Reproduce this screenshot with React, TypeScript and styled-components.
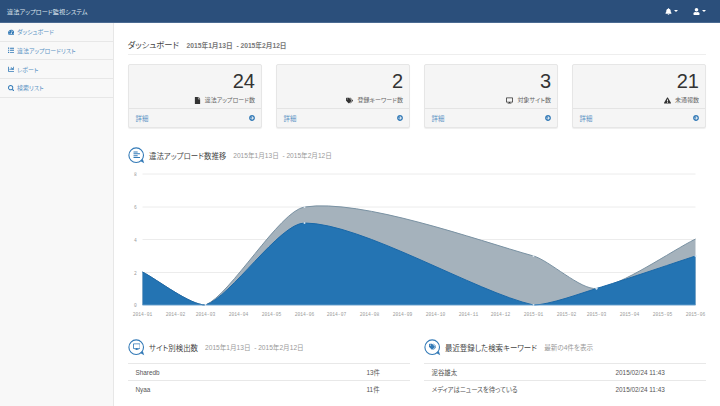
import React from "react";
import styled, { createGlobalStyle } from "styled-components";
import {
  FaTachometerAlt, FaList, FaChartBar, FaSearch, FaFile, FaTags, FaDesktop,
  FaExclamationTriangle, FaArrowCircleRight, FaBell, FaUser, FaAlignLeft,
} from "react-icons/fa";

const Global = createGlobalStyle`
  html, body { margin: 0; padding: 0; width: 720px; height: 406px; overflow: hidden; background: #fff; }
  body { font-family: "Liberation Sans", "Noto Sans CJK JP", sans-serif; color: #333; font-size: 7px; font-feature-settings: "palt"; }
  * { box-sizing: border-box; }
`;

const Page = styled.div`width: 720px; height: 406px; overflow: hidden; display: flex; flex-direction: column;`;
const Navbar = styled.header`
  height: 23px; flex: none; background: #2b4f7b; border-bottom: 1px solid #4a6a92;
  display: flex; align-items: center; justify-content: space-between; padding: 0 14px 0 7px;
`;
const Brand = styled.div`color: #dce4ec; font-size: 6.2px;`;
const NavTools = styled.div`display: flex; gap: 15px; align-items: center;`;
const NavTool = styled.div`display: flex; align-items: center; gap: 2px; color: #fff; font-size: 7px;`;
const Caret = styled.span`
  width: 0; height: 0; border-left: 2.2px solid transparent; border-right: 2.2px solid transparent;
  border-top: 2.2px solid #fff;
`;
const Body = styled.div`flex: 1; display: flex; min-height: 0;`;
const Sidebar = styled.nav`width: 114px; flex: none; background: #f8f8f8; border-right: 1px solid #e7e7e7;`;
const SideItem = styled.a`
  display: flex; align-items: center; gap: 3px; height: 18.7px; padding: 0 0 0 7.5px;
  color: #5b93c4; font-size: 5.95px; border-bottom: 1px solid #e7e7e7;
  svg { color: #337ab7; width: 6.5px; height: 6.5px; flex: none; }
`;
const Main = styled.main`flex: 1; padding: 0 14px 0 13.5px; min-width: 0;`;
const PageHeader = styled.div`
  height: 32px; border-bottom: 1px solid #eee; display: flex; align-items: flex-end; gap: 7.5px;
  padding-bottom: 3.5px; margin-bottom: 9px;
`;
const PageTitle = styled.h1`margin: 0; font-weight: 400; font-size: 8.3px; color: #444; line-height: 11px;`;
const PageDate = styled.span`font-weight: 700; font-size: 6.7px; color: #777; line-height: 10px;`;
const Cards = styled.section`display: grid; grid-template-columns: repeat(4, 134.5px); gap: 13.5px;`;
const Card = styled.article`
  height: 64px; background: #f5f5f5; border: 1px solid #e6e6e6; border-radius: 2px;
  box-shadow: 0 1px 1px rgba(0,0,0,.07); display: flex; flex-direction: column;
`;
const CardBody = styled.div`height: 44px; padding: 5px 6px 0 0; text-align: right; border-bottom: 1px solid #e4e4e4;`;
const CardNum = styled.div`font-size: 20px; line-height: 23px; color: #333;`;
const CardLabel = styled.div`
  display: flex; justify-content: flex-end; align-items: center; gap: 4px; margin-top: 2px;
  font-size: 6px; line-height: 10px; color: #666;
  svg { color: #333; width: 7px; height: 7px; }
`;
const CardFoot = styled.a`
  flex: 1; display: flex; justify-content: space-between; align-items: center; padding: 0 6px 0 7px;
  color: #5b93c4; font-size: 6.4px;
  svg { color: #337ab7; width: 6px; height: 6px; }
`;
const SectionHead = styled.div<{ $top: number }>`
  display: flex; align-items: center; height: 16px; margin-top: ${(p) => p.$top}px; gap: 4px;
`;
const SectionTitle = styled.h2`margin: 0; font-weight: 400; font-size: 7.45px; color: #444;`;
const SectionSub = styled.span`font-size: 6.6px; color: #999; margin-left: 3px;`;
const Bubble = styled.div`
  position: relative; width: 17px; height: 17px; flex: none; margin-left: 0.5px;
  > svg:first-child { position: absolute; inset: 0; width: 17px; height: 17px; }
`;
const BubbleGlyph = styled.div`
  position: absolute; inset: 0; display: flex; align-items: center; justify-content: center; color: #337ab7;
  svg { width: 7.5px; height: 7.5px; }
`;
const ChartWrap = styled.div`margin-top: 7px; height: 150px; svg { display: block; }`;
const Lower = styled.section`display: grid; grid-template-columns: 282.5px 282.5px; gap: 13.5px;`;
const DataTable = styled.div`margin-top: 8px;`;
const DataRow = styled.div<{ $first: number }>`
  display: grid; grid-template-columns: ${(p) => p.$first}px 1fr; height: 17px; align-items: center;
  border-top: 1px solid #e8e8e8; padding-left: 8px; font-size: 6.4px; color: #555;
`;
const DataCell = styled.span``;

type P = { x: number; y: number };
const X0 = 127.5, Y0 = 170;
const top: P[] = [[142, 272], [205, 305], [304, 207], [533, 256], [596, 288.5], [695, 239]].map(([x, y]) => ({ x: x - X0, y: y - Y0 }));
const bot: P[] = [[142, 272], [205, 305], [304, 223], [533, 305], [596, 288.5], [695, 256]].map(([x, y]) => ({ x: x - X0, y: y - Y0 }));
const YMAX = 305 - Y0;

function smooth(c: P[]) {
  const g = c.map((p, i) => {
    if (i === 0) return (c[1].y - p.y) / (c[1].x - p.x);
    if (i === c.length - 1) return (p.y - c[i - 1].y) / (p.x - c[i - 1].x);
    return (c[i + 1].y - c[i - 1].y) / (c[i + 1].x - c[i - 1].x);
  });
  let d = `M${c[0].x},${c[0].y}`;
  for (let i = 1; i < c.length; i++) {
    const ix = (c[i].x - c[i - 1].x) / 4;
    const y1 = Math.min(YMAX, c[i - 1].y + ix * g[i - 1]);
    const y2 = Math.min(YMAX, c[i].y - ix * g[i]);
    d += ` C${c[i - 1].x + ix},${y1} ${c[i].x - ix},${y2} ${c[i].x},${c[i].y}`;
  }
  return d;
}
const area = (d: string, c: P[]) => `${d} L${c[c.length - 1].x},${YMAX} L${c[0].x},${YMAX} Z`;

const grid = [[8, 174], [6, 207], [4, 239.5], [2, 272.5], [0, 305]];
const xLabels: [string, number][] = [
  ["2014-01", 142], ["2014-02", 175], ["2014-03", 205], ["2014-04", 238], ["2014-05", 271], ["2014-06", 304],
  ["2014-07", 336], ["2014-08", 369], ["2014-09", 402], ["2014-10", 435], ["2014-11", 468], ["2014-12", 500],
  ["2015-01", 533], ["2015-02", 566], ["2015-03", 596], ["2015-04", 629], ["2015-05", 662], ["2015-06", 695],
];

function AreaChart() {
  const dt = smooth(top), db = smooth(bot);
  return (
    <svg width={579} height={150} viewBox="0 0 579 150" fontFamily="'Liberation Mono', monospace">
      {grid.map(([v, y]) => (
        <g key={v}>
          <line x1={14.5} x2={567.5} y1={y - Y0} y2={y - Y0} stroke={v === 0 ? "#cfe0ee" : "#ececec"} strokeWidth={1} />
          <text x={7.5} y={y - Y0 + 2} fontSize={4.6} fill="#999" textAnchor="middle">{v}</text>
        </g>
      ))}
      <path d={area(dt, top)} fill="#a5b2bc" />
      <path d={dt} fill="none" stroke="#7a92a3" strokeWidth={1} />
      <path d={area(db, bot)} fill="#2474b3" />
      <path d={db} fill="none" stroke="#1a68a8" strokeWidth={1} />
      <line x1={14.5} x2={567.5} y1={YMAX} y2={YMAX} stroke="#6ea3cf" strokeWidth={0.8} />
      {top.slice(1, 5).map((p) => <circle key={p.x} cx={p.x} cy={p.y} r={1} fill="#dfe8ef" />)}
      {bot.slice(2, 6).map((p) => <circle key={p.x} cx={p.x} cy={p.y} r={1} fill="#cfe0ee" />)}
      {xLabels.map(([t, x]) => (
        <text key={t} x={x - X0} y={146} fontSize={4.6} fill="#999" textAnchor="middle">{t}</text>
      ))}
    </svg>
  );
}

function BubbleIcon({ children }: { children: React.ReactNode }) {
  return (
    <Bubble>
      <svg viewBox="0 0 17 17">
        <circle cx="8.2" cy="8.2" r="7.3" fill="#fff" stroke="#337ab7" strokeWidth="1.1" />
        <path d="M12.2 14 L16.2 16.2 L14.8 12 Z" fill="#337ab7" />
      </svg>
      <BubbleGlyph>{children}</BubbleGlyph>
    </Bubble>
  );
}

const cards = [
  { n: "24", icon: <FaFile />, label: "違法アップロード数" },
  { n: "2", icon: <FaTags />, label: "登録キーワード数" },
  { n: "3", icon: <FaDesktop />, label: "対象サイト数" },
  { n: "21", icon: <FaExclamationTriangle />, label: "未通報数" },
];

export default function App() {
  return (
    <Page>
      <Global />
      <Navbar>
        <Brand>違法アップロード監視システム</Brand>
        <NavTools>
          <NavTool><FaBell /><Caret /></NavTool>
          <NavTool><FaUser /><Caret /></NavTool>
        </NavTools>
      </Navbar>
      <Body>
        <Sidebar>
          <SideItem><FaTachometerAlt />ダッシュボード</SideItem>
          <SideItem><FaList />違法アップロードリスト</SideItem>
          <SideItem><FaChartBar />レポート</SideItem>
          <SideItem><FaSearch />検索リスト</SideItem>
        </Sidebar>
        <Main>
          <PageHeader>
            <PageTitle>ダッシュボード</PageTitle>
            <PageDate>2015年1月13日 &nbsp;- 2015年2月12日</PageDate>
          </PageHeader>
          <Cards>
            {cards.map((c) => (
              <Card key={c.label}>
                <CardBody>
                  <CardNum>{c.n}</CardNum>
                  <CardLabel>{c.icon}{c.label}</CardLabel>
                </CardBody>
                <CardFoot>詳細<FaArrowCircleRight /></CardFoot>
              </Card>
            ))}
          </Cards>
          <SectionHead $top={19}>
            <BubbleIcon><FaAlignLeft /></BubbleIcon>
            <SectionTitle>違法アップロード数推移</SectionTitle>
            <SectionSub>2015年1月13日 &nbsp;- 2015年2月12日</SectionSub>
          </SectionHead>
          <ChartWrap><AreaChart /></ChartWrap>
          <Lower>
            <div>
              <SectionHead $top={19}>
                <BubbleIcon><FaDesktop /></BubbleIcon>
                <SectionTitle>サイト別検出数</SectionTitle>
                <SectionSub>2015年1月13日 &nbsp;- 2015年2月12日</SectionSub>
              </SectionHead>
              <DataTable>
                <DataRow $first={231}><DataCell>Sharedb</DataCell><DataCell>13件</DataCell></DataRow>
                <DataRow $first={231}><DataCell>Nyaa</DataCell><DataCell>11件</DataCell></DataRow>
              </DataTable>
            </div>
            <div>
              <SectionHead $top={19}>
                <BubbleIcon><FaTags /></BubbleIcon>
                <SectionTitle>最近登録した検索キーワード</SectionTitle>
                <SectionSub>最新の4件を表示</SectionSub>
              </SectionHead>
              <DataTable>
                <DataRow $first={184}><DataCell>泥谷雄太</DataCell><DataCell>2015/02/24 11:43</DataCell></DataRow>
                <DataRow $first={184}><DataCell>メディアはニュースを待っている</DataCell><DataCell>2015/02/24 11:43</DataCell></DataRow>
              </DataTable>
            </div>
          </Lower>
        </Main>
      </Body>
    </Page>
  );
}
